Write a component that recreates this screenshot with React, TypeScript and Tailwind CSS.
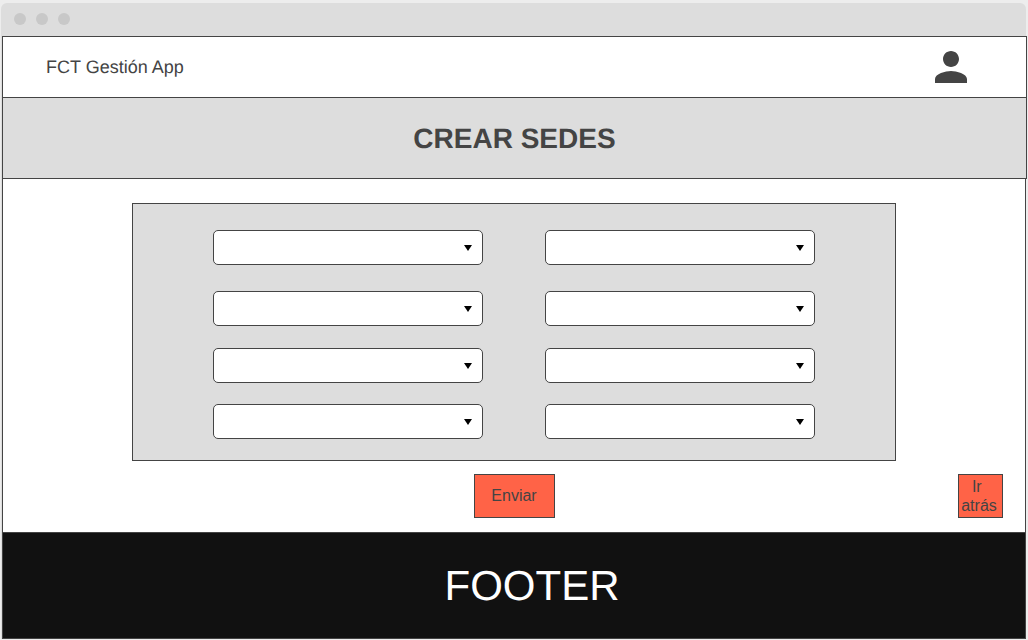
import React from "react";
import { MdPerson } from "react-icons/md";

const fields = [
  "Campo 1",
  "Campo 2",
  "Campo 3",
  "Campo 4",
  "Campo 5",
  "Campo 6",
  "Campo 7",
  "Campo 8",
];

function SelectField({ label }: { label: string }) {
  return (
    <div className="relative h-[35px]">
      <select
        aria-label={label}
        className="block h-full w-full appearance-none rounded-[5px] border border-[#444] bg-white pl-3 pr-8 text-base text-[#444]"
      >
        <option value=""></option>
      </select>
      <svg
        aria-hidden="true"
        viewBox="0 0 8 6"
        className="pointer-events-none absolute right-[11px] top-[15px] h-[6px] w-[8px]"
      >
        <path d="M0 0h8L4 6z" fill="#000" />
      </svg>
    </div>
  );
}

export default function App() {
  return (
    <div className="flex min-h-screen flex-col bg-[#ededed] pt-[3px] pr-[2px] pb-px pl-px font-['Liberation_Sans',Arial,sans-serif] text-[#444] [text-rendering:geometricPrecision]">
      <div className="flex grow flex-col rounded-t-[6px] bg-[#ddd]">
        <div className="flex h-[33px] shrink-0 items-center gap-[10px] px-[13px] pb-px">
          <span className="size-3 rounded-full bg-[#c8c8c8]" />
          <span className="size-3 rounded-full bg-[#c8c8c8]" />
          <span className="size-3 rounded-full bg-[#c8c8c8]" />
        </div>

        <div className="ml-px flex grow flex-col">
          <header className="-mr-px flex h-[62px] items-center justify-between border border-[#444] bg-white pr-[51px] pl-[43px]">
            <span className="text-lg">FCT Gestión App</span>
            <button type="button" aria-label="Perfil">
              <MdPerson className="size-12" />
            </button>
          </header>

          <div className="-mt-px -mr-px flex h-[82px] items-center justify-center border border-[#444] bg-[#ddd] pt-0.5">
            <h1 className="text-[28px] font-bold">CREAR SEDES</h1>
          </div>

          <main className="grow border-x border-[#444] bg-white pt-6 pb-[14px]">
            <form id="sedes" className="mx-auto w-full max-w-[764px] border border-[#444] bg-[#ddd] px-20 pt-[26px] pb-[21px]">
              <div className="grid grid-cols-2 grid-rows-[61px_57px_56px_35px] gap-x-[62px]">
                {fields.map((label) => (
                  <SelectField key={label} label={label} />
                ))}
              </div>
            </form>

            <div className="mt-[13px] grid grid-cols-[1fr_auto_1fr] px-[22px]">
              <button
                type="submit"
                form="sedes"
                className="col-start-2 h-[44px] w-[81px] border border-[#444] bg-[#ff6347] text-base"
              >
                Enviar
              </button>
              <button
                type="button"
                className="h-[44px] w-[45px] justify-self-end border border-[#444] bg-[#ff6347] pr-[3px] text-base leading-[19px] whitespace-break-spaces"
              >
                Ir atrás
              </button>
            </div>
          </main>

          <footer className="flex h-[107px] items-center justify-center border border-[#444] bg-[#111] pl-9 text-white">
            <p className="text-[42px]">FOOTER</p>
          </footer>
        </div>
      </div>
    </div>
  );
}
